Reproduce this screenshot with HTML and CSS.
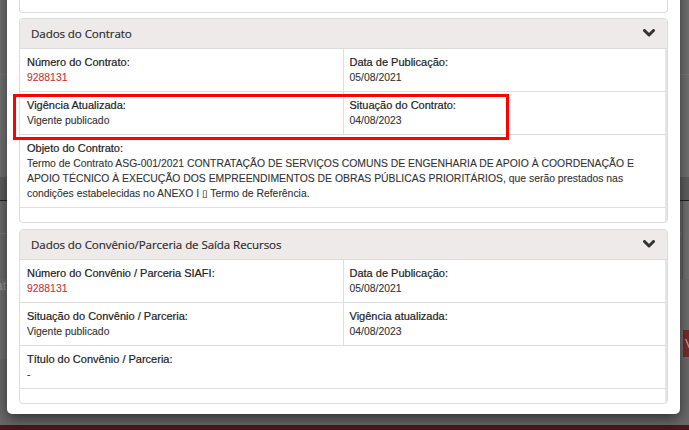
FILE: index.html
```html
<!DOCTYPE html>
<html lang="pt-BR">
<head>
<meta charset="utf-8">
<title>Dados do Contrato</title>
<link rel="stylesheet" href="styles.css">
</head>
<body>
<div class="page">
  <div class="page-top"></div>
  <div class="page-band"></div>
  <div class="page-mid">
    <div class="page-side"></div>
  </div>
  <div class="page-row">
    <span class="page-text">at</span>
    <span class="page-btn">V</span>
  </div>
  <div class="page-fill"></div>
  <div class="page-footer"></div>
</div>

<div class="modal">
  <section class="panel panel-stub"></section>

  <section class="panel">
    <header class="panel-head">
      <h3 class="panel-title">Dados do Contrato</h3>
      <svg class="chev" width="12" height="8" viewBox="0 0 12 8"><polyline points="1.5,1.5 6,6 10.5,1.5" fill="none" stroke="#333" stroke-width="3" stroke-linecap="round" stroke-linejoin="round"/></svg>
    </header>
    <div class="panel-body">
      <div class="row">
        <div class="cell"><div class="lbl">Número do Contrato:</div><div class="val red">9288131</div></div>
        <div class="cell"><div class="lbl">Data de Publicação:</div><div class="val">05/08/2021</div></div>
      </div>
      <div class="row">
        <div class="cell"><div class="lbl">Vigência Atualizada:</div><div class="val">Vigente publicado</div></div>
        <div class="cell"><div class="lbl">Situação do Contrato:</div><div class="val">04/08/2023</div></div>
      </div>
      <div class="row">
        <div class="cell full"><div class="lbl">Objeto do Contrato:</div><div class="val">Termo de Contrato ASG-001/2021 CONTRATAÇÃO DE SERVIÇOS COMUNS DE ENGENHARIA DE APOIO À COORDENAÇÃO E APOIO TÉCNICO À EXECUÇÃO DOS EMPREENDIMENTOS DE OBRAS PÚBLICAS PRIORITÁRIOS, que serão prestados nas condições estabelecidas no ANEXO I <span class="tofu">&#x25AF;</span> Termo de Referência.</div></div>
      </div>
    </div>
    <div class="highlight"></div>
  </section>

  <section class="panel">
    <header class="panel-head">
      <h3 class="panel-title">Dados do Convênio/Parceria de Saída Recursos</h3>
      <svg class="chev" width="12" height="8" viewBox="0 0 12 8"><polyline points="1.5,1.5 6,6 10.5,1.5" fill="none" stroke="#333" stroke-width="3" stroke-linecap="round" stroke-linejoin="round"/></svg>
    </header>
    <div class="panel-body">
      <div class="row">
        <div class="cell"><div class="lbl">Número do Convênio / Parceria SIAFI:</div><div class="val red">9288131</div></div>
        <div class="cell"><div class="lbl">Data de Publicação:</div><div class="val">05/08/2021</div></div>
      </div>
      <div class="row">
        <div class="cell"><div class="lbl">Situação do Convênio / Parceria:</div><div class="val">Vigente publicado</div></div>
        <div class="cell"><div class="lbl">Vigência atualizada:</div><div class="val">04/08/2023</div></div>
      </div>
      <div class="row">
        <div class="cell full"><div class="lbl">Título do Convênio / Parceria:</div><div class="val">-</div></div>
      </div>
    </div>
  </section>
</div>
</body>
</html>
```

FILE: styles.css
```css
html, body {
  margin: 0;
  padding: 0;
  width: 689px;
  height: 430px;
  overflow: hidden;
}
body {
  background: #707070;
  position: relative;
  font-family: "Liberation Sans", Arial, sans-serif;
}

/* underlying page, dimmed by the overlay */
.page {
  position: absolute;
  inset: 0;
  display: flex;
  flex-direction: column;
}
.page-top {
  height: 177px;
  background: linear-gradient(#727272 0 74px, #7a7a7a 74px 75px, #727272 75px);
}
.page-band {
  height: 23px;
  background: #5f5f5f;
  border-bottom: 1px solid #222;
}
.page-mid {
  height: 78px;
  display: flex;
  justify-content: flex-end;
  background: linear-gradient(#6c6c6c 0 32px, #7a7a7a 32px 33px, #6c6c6c 33px);
}
.page-side {
  width: 6px;
  border-left: 1px solid #5a5a5a;
  background: #737373;
}
.page-row {
  height: 80px;
  display: flex;
  justify-content: space-between;
  align-items: flex-end;
  background: #6f6f6f;
}
.page-text {
  font-size: 12px;
  color: #9a9a9a;
  margin-bottom: 66px;
  margin-left: -4px;
}
.page-btn {
  width: 10px;
  height: 27px;
  background: #7a2b2b;
  color: #c9a6a6;
  font-size: 13px;
  line-height: 27px;
  padding-left: 2px;
  box-sizing: border-box;
  margin-right: -4px;
  margin-bottom: 2px;
}
.page-fill {
  flex: 1;
  background: #6a6a6a;
}
.page-footer {
  height: 5px;
  background: #4a1820;
}

/* modal */
.modal {
  position: absolute;
  left: 7px;
  top: -20px;
  width: 673px;
  background: #fff;
  border-radius: 5px;
  box-shadow: 0 5px 14px rgba(0, 0, 0, 0.55);
  padding: 0 12px 10px;
  box-sizing: border-box;
  display: flex;
  flex-direction: column;
  gap: 5px;
}
.panel {
  position: relative;
  border: 1px solid #dcdcdc;
  border-radius: 4px;
  background: #fff;
}
.panel-stub {
  height: 32px;
  border-top: none;
  border-radius: 0 0 4px 4px;
}
.panel + .panel + .panel {
  margin-top: 1px;
}
.panel-head {
  height: 29px;
  background: #edeae9;
  border-bottom: 1px solid #dcdcdc;
  border-radius: 3px 3px 0 0;
  display: flex;
  align-items: center;
  justify-content: space-between;
  padding: 0 12px 0 11px;
}
.panel-title {
  margin: 0;
  font-family: "Open Sans", "Noto Sans", sans-serif;
  font-weight: 400;
  font-size: 11.6px;
  color: #2a2a2a;
  letter-spacing: -0.1px;
  -webkit-text-stroke: 0.15px #2a2a2a;
}
.chev {
  display: block;
  margin-top: -2px;
}
.panel-body {
  padding-bottom: 14px;
  border-right: 2px solid #e6e6e6;
}
.row {
  display: flex;
  border-bottom: 1px solid #dedede;
}
.cell {
  flex: 1;
  padding: 6px 8px 6px 7px;
  line-height: 15px;
}
.cell + .cell {
  border-left: 1px solid #dedede;
  padding-left: 6px;
}
.cell.full {
  flex: 1 1 100%;
}
.lbl {
  font-size: 11px;
  color: #222;
  -webkit-text-stroke: 0.2px #222;
}
.val {
  font-size: 10.4px;
  color: #333;
  -webkit-text-stroke: 0.1px #333;
}
.val.red {
  color: #c8343b;
  -webkit-text-stroke: 0.1px #c8343b;
}
.tofu {
  font-family: "DejaVu Sans", sans-serif;
  font-size: 10px;
}
.highlight {
  position: absolute;
  left: -7px;
  top: 75px;
  width: 490px;
  height: 40px;
  border: 3px solid #f00;
  pointer-events: none;
}
```
